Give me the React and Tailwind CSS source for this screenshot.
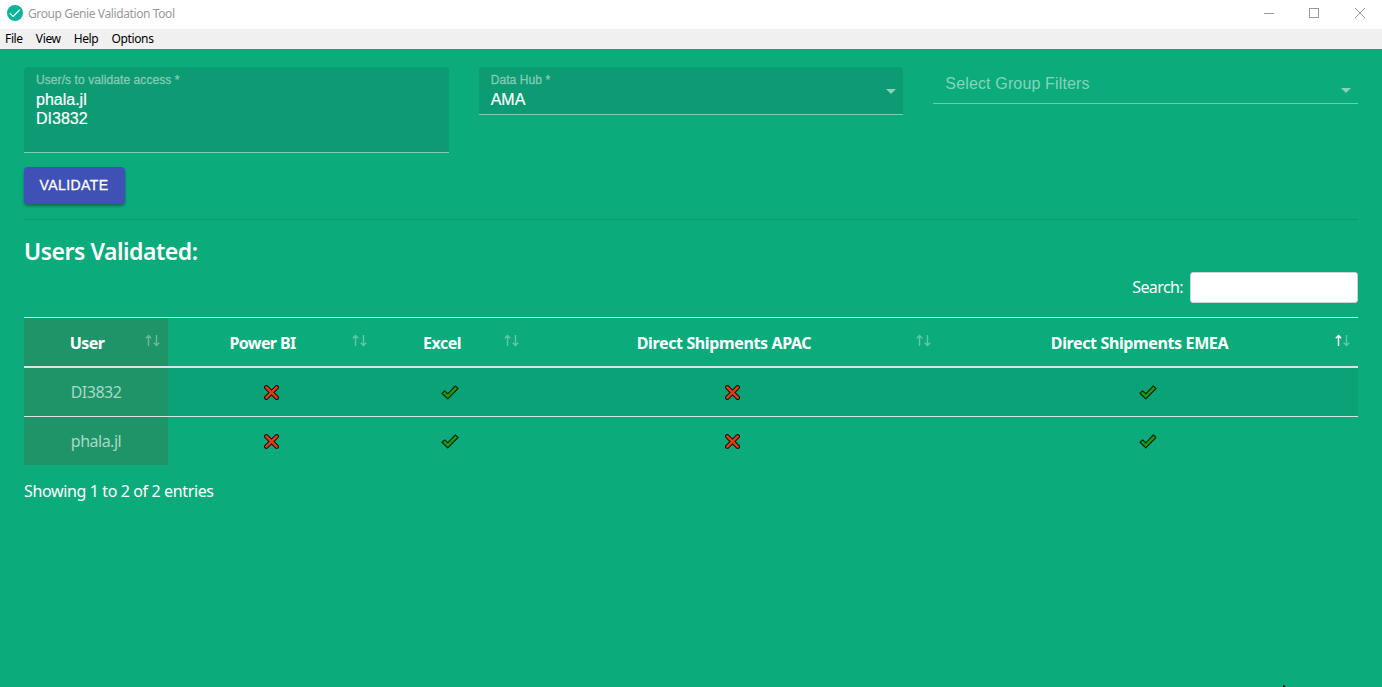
import React from "react";

const CHECK = "M1 9.3 L3.6 6.9 L6.8 9.8 L14.3 2 L17 4.5 L6.8 14.8 Z";

function CheckIcon() {
  return (
    <svg width="18" height="16" viewBox="0 0 18 16" className="mr-[2px] block">
      <path d={CHECK} fill="#1aa012" stroke="#0a2410" strokeWidth="1.2" strokeLinejoin="round" />
    </svg>
  );
}

function CrossIcon() {
  return (
    <svg width="15" height="15" viewBox="0 0 15 15" className="mt-px mr-px block" strokeLinecap="round">
      <path d="M2.3 2.3 L12.7 12.7 M12.7 2.3 L2.3 12.7" stroke="#1c0d08" strokeWidth="4.5" />
      <path d="M2.3 2.3 L12.7 12.7 M12.7 2.3 L2.3 12.7" stroke="#e23c12" strokeWidth="2.5" />
    </svg>
  );
}

function SortIcon({ active }) {
  return (
    <svg width="16" height="13" viewBox="0 0 16 13" className="block" fill="none" stroke="#fff">
      <path d="M4.5 12V2M1.8 4.2L4.5 1.4L7.2 4.2" strokeWidth="1.4" opacity={active ? 1 : 0.35} />
      <path d="M12.5 1V11M9.8 8.8L12.5 11.6L15.2 8.8" strokeWidth="1.4" opacity="0.35" />
    </svg>
  );
}

function Arrow() {
  return (
    <svg width="10" height="5" viewBox="0 0 10 5" className="block">
      <path d="M0 0H10L5 5Z" fill="#8dd0b9" />
    </svg>
  );
}

const COLUMNS = [
  { label: "User", tracking: "tracking-[-0.6px]" },
  { label: "Power BI", tracking: "tracking-[-0.6px]" },
  { label: "Excel", tracking: "tracking-[-0.5px]" },
  { label: "Direct Shipments APAC", tracking: "tracking-[-0.37px]" },
  { label: "Direct Shipments EMEA", tracking: "tracking-[-0.37px]", active: true },
];

const ROWS = [
  { user: "DI3832", access: [false, true, false, true] },
  { user: "phala.jl", access: [false, true, false, true] },
];

const GRID = "grid grid-cols-[144px_207px_152px_412px_419px]";
const FIELD_LABEL = "text-[12px] leading-4 tracking-[0.08px] text-[#85cbb3] [-webkit-text-stroke:0.3px]";

export default function App() {
  return (
    <div className="relative flex h-[687px] w-[1382px] flex-col overflow-hidden bg-[#0cab7c] font-['Noto_Sans','Open_Sans',sans-serif] text-white">
      <header className="flex h-[29px] shrink-0 items-start bg-white">
        <svg width="16" height="16" viewBox="0 0 16 16" className="ml-[7px] mt-[5px] block">
          <circle cx="8" cy="8" r="8" fill="#0fb39a" />
          <path d="M2.8 8.3L6.2 11.5L12.8 4.6" fill="none" stroke="#fff" strokeWidth="1.1" />
        </svg>
        <span className="ml-[5px] mt-[5px] whitespace-nowrap text-[12px] leading-[18px] tracking-[-0.39px] text-[#999]">Group Genie Validation Tool</span>
        <svg width="106" height="12" viewBox="0 0 106 12" className="ml-auto mr-[14px] mt-[7px] block" fill="none" stroke="#999">
          <path d="M2 6.5H12" />
          <rect x="47.5" y="1.5" width="9" height="9" />
          <path d="M93 1L103 11M103 1L93 11" />
        </svg>
      </header>
      <nav className="flex h-5 shrink-0 gap-[13px] bg-[#f0f0f0] pl-[5px] text-[12px] leading-5 tracking-[-0.35px] text-black">
        <span>File</span>
        <span>View</span>
        <span>Help</span>
        <span>Options</span>
      </nav>
      <main className="flex flex-col px-6 pt-[18px]">
        <section className="grid grid-cols-3 items-start gap-[30px] font-['Liberation_Sans',sans-serif]">
          <div className="h-[86px] rounded-t border-b border-[#88c9b4] bg-[#0c9b73] pl-3 pt-[5px]">
            <div className={FIELD_LABEL}>User/s to validate access *</div>
            <div className="mt-[2px] text-[16px] leading-[19px] [-webkit-text-stroke:0.2px]">phala.jl</div>
            <div className="text-[16px] leading-[19px] [-webkit-text-stroke:0.2px]">DI3832</div>
          </div>
          <div className="flex h-12 rounded-t border-b border-[#88c9b4] bg-[#0c9b73] pl-3 pr-[7px]">
            <div className="flex-1 pt-[5px]">
              <div className={FIELD_LABEL}>Data Hub *</div>
              <div className="mt-[2px] text-[16px] leading-[19px] [-webkit-text-stroke:0.2px]">AMA</div>
            </div>
            <div className="pt-[22px]"><Arrow /></div>
          </div>
          <div className="flex h-[37px] border-b border-[#6dcdb0] pl-3 pr-[7px]">
            <div className="flex-1 pt-[7px] text-[16px] leading-[19px] tracking-[0.15px] text-[#85d3ba]">Select Group Filters</div>
            <div className="pt-[21px]"><Arrow /></div>
          </div>
        </section>
        <button className="mt-[14px] h-[37px] w-[101px] rounded bg-[#3f51b5] pr-px font-['Liberation_Sans',sans-serif] text-[14px] tracking-[0.4px] shadow-[0_2px_3px_rgba(0,0,0,0.35)] [-webkit-text-stroke:0.3px]">VALIDATE</button>
        <hr className="mt-[15px] border-[#0a9a70]" />
        <h2 className="mt-[13px] whitespace-nowrap text-[23px] font-semibold leading-9 tracking-[-0.48px]">Users Validated:</h2>
        <div className="mt-[3px] flex h-[31px] items-center justify-end">
          <label htmlFor="search" className="mr-[7px] pb-[2px] text-[16px] tracking-[-0.6px]">Search:</label>
          <input id="search" className="h-[31px] w-[168px] rounded-[3px] border border-[#ced4da] bg-white" />
        </div>
        <section className="mt-[14px] border-t border-[#dee2e6]">
          <div className={GRID + " h-[50px] border-b-2 border-[#dee2e6]"}>
            {COLUMNS.map((c, i) => (
              <div key={c.label} className={"flex items-center " + (i === 0 ? "bg-[#1f9468]" : "")}>
                <span className={"ml-3 flex-1 whitespace-nowrap pt-px text-center text-[16px] font-bold " + c.tracking}>{c.label}</span>
                <span className="mr-2 flex w-[22px] justify-end pb-[3px]"><SortIcon active={c.active} /></span>
              </div>
            ))}
          </div>
          {ROWS.map((r, i) => (
            <div key={r.user} className={GRID + (i === 0 ? " h-[49px] border-b border-[#dee2e6] bg-[#0ca277]" : " h-12")}>
              <div className="flex items-center justify-center bg-[#1f9468] text-[16px] tracking-[-0.5px] text-[#a9d8c6]">{r.user}</div>
              {r.access.map((ok, j) => (
                <div key={j} className="flex items-center justify-center">{ok ? <CheckIcon /> : <CrossIcon />}</div>
              ))}
            </div>
          ))}
        </section>
        <p className="mt-[14px] text-[16px] leading-6 tracking-[-0.37px]">Showing 1 to 2 of 2 entries</p>
      </main>
      <svg width="3" height="2" viewBox="0 0 3 2" className="absolute bottom-0 left-[1283px]">
        <path d="M0 0H1L3 2H0Z" fill="#0a1a14" />
      </svg>
    </div>
  );
}
